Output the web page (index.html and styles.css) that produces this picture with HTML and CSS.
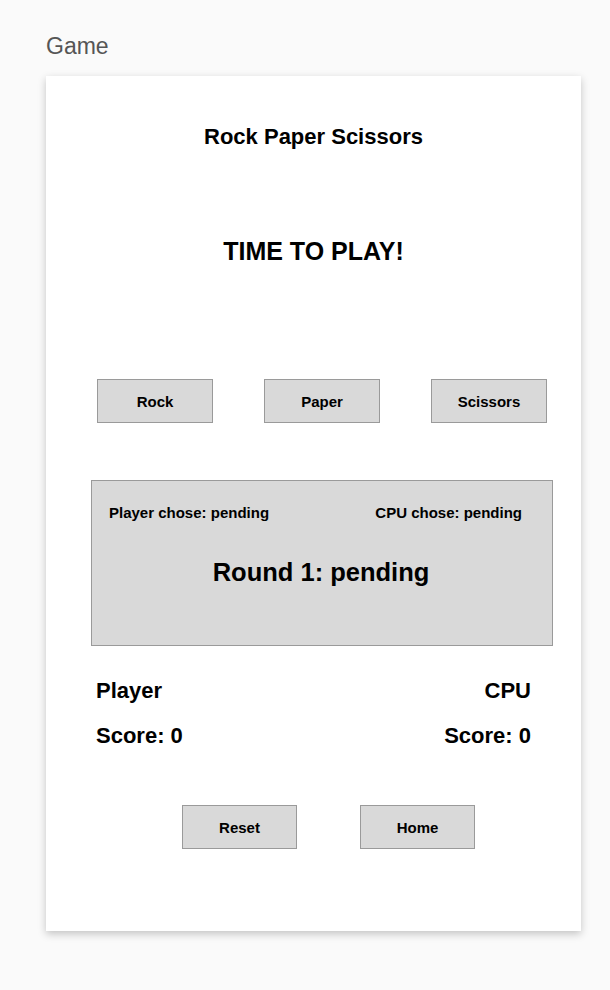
FILE: index.html
```html
<!DOCTYPE html>
<html lang="en">
<head>
<meta charset="utf-8">
<title>Game</title>
<link rel="stylesheet" href="styles.css">
</head>
<body>
<div class="page">
  <div class="page-label">Game</div>
  <div class="card">
    <h1 class="title">Rock Paper Scissors</h1>
    <h2 class="prompt">TIME TO PLAY!</h2>
    <div class="choices">
      <button class="btn">Rock</button>
      <button class="btn">Paper</button>
      <button class="btn">Scissors</button>
    </div>
    <div class="result">
      <div class="result-picks">
        <span>Player chose: pending</span>
        <span>CPU chose: pending</span>
      </div>
      <div class="result-round">Round 1: pending</div>
    </div>
    <div class="scores">
      <div class="score-col">
        <div class="score-line">Player</div>
        <div class="score-line">Score: 0</div>
      </div>
      <div class="score-col right">
        <div class="score-line">CPU</div>
        <div class="score-line">Score: 0</div>
      </div>
    </div>
    <div class="actions">
      <button class="btn">Reset</button>
      <button class="btn">Home</button>
    </div>
  </div>
</div>
</body>
</html>
```
FILE: styles.css
```css
* { box-sizing: border-box; }
html, body { margin: 0; padding: 0; }
body {
  background: #fafafa;
  font-family: "Liberation Sans", Arial, Helvetica, sans-serif;
  color: #000;
  width: 610px;
  height: 990px;
  overflow: hidden;
}
.page {
  padding: 31px 0 0 46px;
}
.page-label {
  font-size: 23px;
  line-height: 30px;
  color: #555;
  margin-bottom: 15px;
}
.card {
  width: 535px;
  height: 855px;
  background: #fff;
  box-shadow: 0 3px 8px rgba(0, 0, 0, 0.22);
  padding-top: 46px;
}
.title {
  margin: 0;
  font-size: 22px;
  line-height: 30px;
  font-weight: bold;
  text-align: center;
}
.prompt {
  margin: 84px 0 0;
  font-size: 25px;
  line-height: 30px;
  font-weight: bold;
  text-align: center;
}
.btn {
  width: 116px;
  height: 44px;
  background: #d9d9d9;
  border: 1px solid #9a9a9a;
  border-radius: 0;
  font-family: "Liberation Sans", Arial, Helvetica, sans-serif;
  font-size: 15px;
  font-weight: bold;
  color: #000;
  padding: 1px 0 0;
  margin: 0;
}
.choices {
  display: flex;
  gap: 51px;
  margin: 113px 0 0 51px;
}
.result {
  margin: 57px 0 0 45px;
  width: 462px;
  height: 166px;
  background: #d9d9d9;
  border: 1px solid #9a9a9a;
  padding: 22px 30px 0 17px;
}
.result-picks {
  display: flex;
  justify-content: space-between;
  font-size: 15px;
  line-height: 20px;
  font-weight: bold;
}
.result-round {
  margin-top: 34px;
  font-size: 25.5px;
  line-height: 30px;
  font-weight: bold;
  text-align: center;
  padding-left: 11px;
}
.scores {
  display: flex;
  justify-content: space-between;
  margin: 30px 50px 0 50px;
}
.score-col {
  display: flex;
  flex-direction: column;
  gap: 15px;
}
.score-col.right { text-align: right; }
.score-line {
  font-size: 22px;
  line-height: 30px;
  font-weight: bold;
}
.actions {
  display: flex;
  gap: 63px;
  margin: 54px 0 0 136px;
}
.actions .btn { width: 115px; }
```
